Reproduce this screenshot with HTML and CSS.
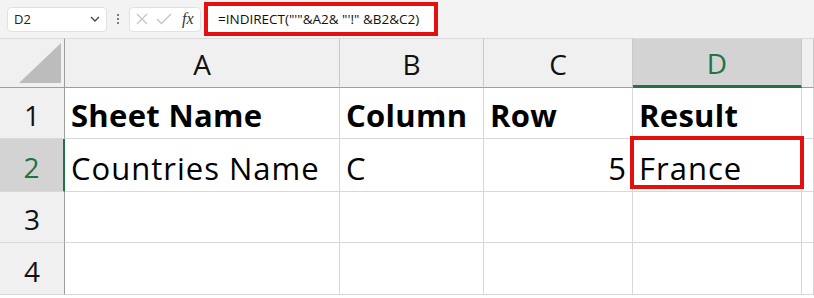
FILE: index.html
```html
<!DOCTYPE html>
<html>
	<head>
		<meta charset="UTF-8">
		<title>INDIRECT</title>
		<link rel="stylesheet" href="styles.css">
	</head>
	<body>
		<div class="topbar">
			<div class="namebox">
				<span>D2</span>
				<svg class="chev" width="10" height="6" viewBox="0 0 10 6"><path d="M1 1 L5 5 L9 1" fill="none" stroke="#444" stroke-width="1.3"/></svg>
			</div>
			<div class="dots"><i></i><i></i><i></i></div>
			<div class="btns">
				<svg width="12" height="12" viewBox="0 0 12 12"><path d="M1 1 L11 11 M11 1 L1 11" stroke="#c4c4c4" stroke-width="1.3"/></svg>
				<svg width="16" height="12" viewBox="0 0 16 12"><path d="M1 6 L5.5 10.5 L15 1" fill="none" stroke="#c4c4c4" stroke-width="1.3"/></svg>
				<span class="fx">fx</span>
			</div>
			<div class="formula">=INDIRECT("'"&amp;A2&amp; "'!" &amp;B2&amp;C2)</div>
		</div>
		<div class="sheet">
			<div class="hd corner"><b></b></div>
			<div class="hd col">A</div>
			<div class="hd col">B</div>
			<div class="hd col">C</div>
			<div class="hd col sel">D</div>
			<div class="hd col"></div>

			<div class="hd row">1</div>
			<div class="cell bold">Sheet Name</div>
			<div class="cell bold">Column</div>
			<div class="cell bold">Row</div>
			<div class="cell bold">Result</div>
			<div class="cell"></div>

			<div class="hd row sel">2</div>
			<div class="cell">Countries Name</div>
			<div class="cell">C</div>
			<div class="cell num">5</div>
			<div class="cell active">France</div>
			<div class="cell"></div>

			<div class="hd row">3</div>
			<div class="cell"></div>
			<div class="cell"></div>
			<div class="cell"></div>
			<div class="cell"></div>
			<div class="cell"></div>

			<div class="hd row">4</div>
			<div class="cell"></div>
			<div class="cell"></div>
			<div class="cell"></div>
			<div class="cell"></div>
			<div class="cell"></div>
		</div>
	</body>
</html>
```

FILE: styles.css
```css
body{
	margin: 0;
	background: #fff;
	font-family: "Open Sans", "Liberation Sans", sans-serif;
	overflow: hidden;
}
.topbar{
	height: 38px;
	background: #f3f3f3;
	display: flex;
	align-items: center;
	padding-left: 7px;
	box-sizing: border-box;
}
.namebox{
	width: 100px;
	height: 25px;
	background: #fff;
	border: 1px solid #e2e2e2;
	border-radius: 4px;
	box-sizing: border-box;
	display: flex;
	align-items: center;
	justify-content: space-between;
	padding: 0 6px 0 6px;
	font-size: 13px;
	color: #222;
}
.dots{
	width: 22px;
	display: flex;
	flex-direction: column;
	align-items: center;
	gap: 2px;
}
.dots i{
	width: 2px;
	height: 2px;
	background: #555;
	border-radius: 1px;
}
.btns{
	width: 72px;
	height: 25px;
	background: #fff;
	border: 1px solid #e2e2e2;
	border-radius: 4px;
	box-sizing: border-box;
	display: flex;
	align-items: center;
	padding-left: 6px;
	gap: 8px;
}
.fx{
	font: italic 16px "Liberation Serif", serif;
	color: #333;
	margin-left: 2px;
}
.formula{
	margin-left: 3px;
	width: 234px;
	height: 34px;
	border: 4px solid #e3100f;
	box-sizing: border-box;
	background: #fff;
	font-size: 13.5px;
	line-height: 26px;
	padding-left: 10px;
	color: #111;
	white-space: nowrap;
}
.sheet{
	display: grid;
	grid-template-columns: 65px 275px 144px 149px 169px 12px;
	grid-template-rows: 50px 51px 53px 51px 52px;
}
.hd{
	background: #f0f0f0;
	border-right: 1px solid #c8c8c8;
	border-bottom: 1px solid #c8c8c8;
	box-sizing: border-box;
	color: #111;
	font-size: 28px;
	display: flex;
	align-items: center;
	justify-content: center;
}
.hd.col{
	border-top: 1px solid #dadada;
	border-bottom: 1px solid #9e9e9e;
	padding-top: 2px;
}
.corner{
	border-top: 1px solid #dadada;
	border-right: 1px solid #9e9e9e;
	border-bottom: 1px solid #9e9e9e;
	justify-content: flex-end;
	align-items: flex-end;
	padding: 0 3px 4px 0;
}
.corner b{
	width: 42px;
	height: 40px;
	background: #bcbcbc;
	clip-path: polygon(100% 0, 100% 100%, 0 100%);
}
.hd.row{
	border-right: 1px solid #9e9e9e;
	border-bottom: 1px solid #d8d8d8;
	padding-top: 4px;
}
.hd.sel{
	background: #d3d3d3;
	color: #217346;
}
.hd.col.sel{
	border-bottom: 3px solid #217346;
}
.hd.row.sel{
	border-right: 2px solid #217346;
}
.cell{
	border-right: 1px solid #d8d8d8;
	border-bottom: 1px solid #d8d8d8;
	box-sizing: border-box;
	font-size: 31px;
	letter-spacing: 1px;
	color: #000;
	display: flex;
	align-items: flex-end;
	padding: 0 0 2px 6px;
	white-space: nowrap;
	position: relative;
}
.bold{
	font-weight: 700;
	letter-spacing: 0.3px;
}
.num{
	justify-content: flex-end;
	padding-right: 5px;
}
.active::after{
	content: "";
	position: absolute;
	left: -3px;
	top: -3px;
	width: 174px;
	height: 53px;
	border: 4px solid #e3100f;
	box-sizing: border-box;
}
```
